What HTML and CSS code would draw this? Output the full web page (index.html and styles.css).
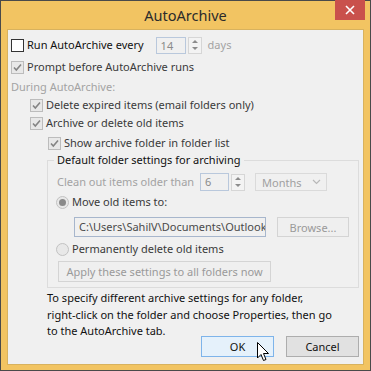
FILE: index.html
```html
<!DOCTYPE html>
<html>
<head>
<meta charset="utf-8">
<link rel="stylesheet" href="styles.css">
</head>
<body>
<div class="window">
  <div class="titlebar">
    <span class="title">AutoArchive</span>
    <span class="close">
      <svg width="10" height="10" viewBox="0 0 10 10"><path d="M1 1 L9 9 M9 1 L1 9" stroke="#fff" stroke-width="1.6"/></svg>
    </span>
  </div>
  <div class="content">
    <div class="row r1">
      <span class="cb"></span>
      <span class="lbl dark">Run AutoArchive every</span>
      <span class="num w14">14</span>
      <span class="spin"><span class="up"></span><span class="dn"></span></span>
      <span class="lbl light days">days</span>
    </div>
    <div class="row r2">
      <span class="cb checked"></span>
      <span class="lbl mid">Prompt before AutoArchive runs</span>
    </div>
    <div class="row r3">
      <span class="lbl light">During AutoArchive:</span>
    </div>
    <div class="row r4 ind1">
      <span class="cb checked"></span>
      <span class="lbl mid">Delete expired items (email folders only)</span>
    </div>
    <div class="row r5 ind1">
      <span class="cb checked"></span>
      <span class="lbl mid">Archive or delete old items</span>
    </div>
    <div class="row r6 ind2">
      <span class="cb checked"></span>
      <span class="lbl mid">Show archive folder in folder list</span>
    </div>
    <fieldset class="group">
      <legend>Default folder settings for archiving</legend>
      <div class="row g1">
        <span class="lbl light clean">Clean out items older than</span>
        <span class="num w6">6</span>
        <span class="spin"><span class="up"></span><span class="dn"></span></span>
        <span class="select">Months<svg width="9" height="6" viewBox="0 0 9 6"><path d="M1 1 L4.5 4.5 L8 1" stroke="#b8b8b8" fill="none" stroke-width="1.2"/></svg></span>
      </div>
      <div class="row g2">
        <span class="radio on"></span>
        <span class="lbl mid">Move old items to:</span>
      </div>
      <div class="row g3">
        <span class="path">C:\Users\SahilV\Documents\Outlook</span>
        <span class="btn browse">Browse...</span>
      </div>
      <div class="row g4">
        <span class="radio"></span>
        <span class="lbl mid">Permanently delete old items</span>
      </div>
      <div class="row g5">
        <span class="btn apply">Apply these settings to all folders now</span>
      </div>
    </fieldset>
    <p class="note">To specify different archive settings for any folder,<br>right-click on the folder and choose Properties, then go<br>to the AutoArchive tab.</p>
    <div class="buttons">
      <span class="btn ok">OK</span>
      <span class="btn cancel">Cancel</span>
    </div>
    <svg class="cursor" width="13" height="20" viewBox="0 0 13 20"><path d="M0.5 0.5 L0.5 16 L4 12.5 L6.5 18.5 L9 17.5 L6.5 11.5 L11.5 11.5 Z" fill="#fff" stroke="#000" stroke-width="1" stroke-linejoin="round"/></svg>
  </div>
</div>
</body>
</html>
```

FILE: styles.css
```css
html, body {
  margin: 0;
  padding: 0;
  background: #f2c462;
}
body {
  width: 371px;
  height: 371px;
  overflow: hidden;
  font-family: "Noto Sans", "Open Sans", sans-serif;
  font-size: 11px;
}
.window {
  box-sizing: border-box;
  width: 371px;
  height: 371px;
  border: 1px solid #4a4a4a;
  background: #f2c462;
  display: flex;
  flex-direction: column;
}
.titlebar {
  position: relative;
  flex: none;
  height: 28px;
  display: flex;
  align-items: center;
  justify-content: center;
}
.title {
  font-size: 14.5px;
  color: #2b2b2b;
  margin-top: -1px;
}
.close {
  position: absolute;
  top: -1px;
  right: 5px;
  width: 30px;
  height: 20px;
  background: #c9514c;
  display: flex;
  align-items: center;
  justify-content: center;
}
.content {
  position: relative;
  flex: 1;
  min-height: 0;
  margin: 0 6px 5px 6px;
  border: 1px solid #d8b25e;
  background: #f0f0f0;
  padding: 6px 0 0 3px;
  display: flex;
  flex-direction: column;
}
.row {
  display: flex;
  align-items: center;
  height: 18px;
  flex: none;
  white-space: nowrap;
}
.row > * { flex: none; }
.r2 { margin-top: 4px; }
.r3 { margin-top: 2px; }
.r6 { margin-top: 2px; }
.ind1 { padding-left: 19px; }
.ind2 { padding-left: 37px; }
.lbl { line-height: 18px; }
.dark { color: #111; }
.mid { color: #3a3a3a; }
.light { color: #a3a3a3; }
.clean { width: 137px; }
.cb {
  box-sizing: border-box;
  width: 13px;
  height: 13px;
  border: 1px solid #333;
  background: #fff;
  margin-right: 3px;
}
.cb.checked {
  border-color: #bcbcbc;
  background: #e8e8e8 url("data:image/svg+xml;utf8,<svg xmlns='http://www.w3.org/2000/svg' width='11' height='11' viewBox='0 0 11 11'><path d='M2 5.5 L4.3 8 L9 2.5' stroke='%23848484' stroke-width='1.6' fill='none'/></svg>") center/11px 11px no-repeat;
}
.num {
  box-sizing: border-box;
  height: 17px;
  border: 1px solid #b9c8dc;
  background: #f0f0f0;
  color: #8a8a8a;
  padding-left: 4px;
  line-height: 15px;
}
.w14 { width: 30px; margin-left: 12px; }
.w6 { width: 29px; margin-left: 6px; height: 18px; }
.spin {
  box-sizing: border-box;
  width: 14px;
  height: 17px;
  border: 1px solid #d6d6d6;
  margin-left: 2px;
  display: flex;
  flex-direction: column;
  align-items: center;
  justify-content: space-around;
  background: #f3f3f3;
}
.up, .dn {
  width: 0;
  height: 0;
  border-left: 3px solid transparent;
  border-right: 3px solid transparent;
}
.up { border-bottom: 3px solid #8c8c8c; }
.dn { border-top: 3px solid #8c8c8c; }
.days { margin-left: 6px; }
.group {
  flex: none;
  margin: 0 4px 0 36px;
  padding: 0 0 5px 9px;
  border: 1px solid #dcdcdc;
  min-width: 0;
}
.group legend {
  padding: 0 3px;
  margin-left: -3px;
  color: #111;
  line-height: 16px;
}
.g1 { margin-top: 5px; }
.select {
  box-sizing: border-box;
  width: 72px;
  height: 18px;
  border: 1px solid #dadada;
  margin-left: 10px;
  color: #a0a0a0;
  padding-left: 6px;
  display: flex;
  align-items: center;
  justify-content: space-between;
  padding-right: 5px;
}
.g2 { margin-top: 2px; }
.radio {
  box-sizing: border-box;
  width: 13px;
  height: 13px;
  border-radius: 50%;
  border: 1px solid #c2c2c2;
  background: #e8e8e8;
  margin-right: 3px;
  margin-left: -1px;
  position: relative;
}
.radio.on::after {
  content: "";
  position: absolute;
  left: 2px;
  top: 2px;
  width: 7px;
  height: 7px;
  border-radius: 50%;
  background: #8a8a8a;
}
.g3 { margin-top: 6px; height: 20px; }
.path {
  box-sizing: border-box;
  width: 192px;
  height: 20px;
  margin-left: 17px;
  border: 1px solid #a7b6cc;
  color: #4a4a4a;
  padding-left: 4px;
  line-height: 18px;
  overflow: hidden;
}
.btn {
  box-sizing: border-box;
  border: 1px solid #d4d4d4;
  background: #efefef;
  color: #9a9a9a;
  display: flex;
  align-items: center;
  justify-content: center;
}
.browse {
  width: 72px;
  height: 20px;
  margin-left: 11px;
}
.g4 { margin-top: 3px; }
.g5 { margin-top: 3px; height: 21px; }
.apply {
  width: 213px;
  height: 21px;
  margin-left: 1px;
}
.note {
  flex: none;
  margin: 2px 0 0 36px;
  line-height: 16.5px;
  color: #111;
}
.buttons {
  flex: none;
  display: flex;
  justify-content: flex-end;
  gap: 12px;
  margin-top: -4px;
  padding-right: 4px;
}
.ok, .cancel {
  width: 73px;
  height: 21px;
  color: #111;
}
.ok {
  border-color: #7eb4ea;
  background: #e5f1fb;
}
.cancel {
  border-color: #adadad;
  background: #e1e1e1;
}
.cursor {
  position: absolute;
  left: 249px;
  top: 312px;
}
```
